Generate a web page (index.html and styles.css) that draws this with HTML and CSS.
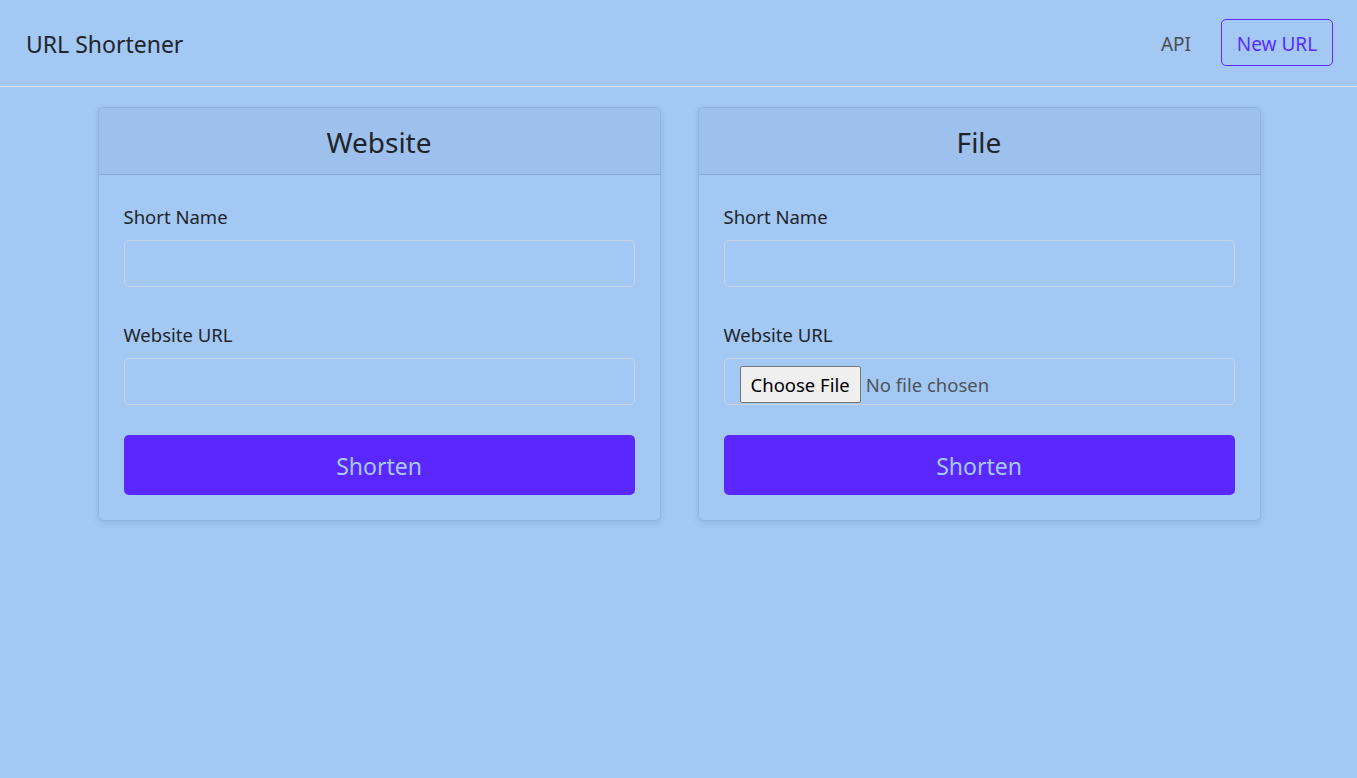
FILE: index.html
```html
<!DOCTYPE html>
<html lang="en">
<head>
<meta charset="utf-8">
<title>URL Shortener</title>
<link rel="stylesheet" href="styles.css">
</head>
<body>
<header class="navbar">
  <a class="brand" href="#">URL Shortener</a>
  <nav class="nav">
    <a class="nav-link" href="#">API</a>
    <a class="btn-outline" href="#">New URL</a>
  </nav>
</header>
<main class="container">
  <section class="card">
    <div class="card-header"><h3>Website</h3></div>
    <form class="card-body">
      <label class="label">Short Name</label>
      <input class="input" type="text">
      <label class="label second">Website URL</label>
      <input class="input" type="text">
      <button class="btn-primary" type="button">Shorten</button>
    </form>
  </section>
  <section class="card">
    <div class="card-header"><h3>File</h3></div>
    <form class="card-body">
      <label class="label">Short Name</label>
      <input class="input" type="text">
      <label class="label second">Website URL</label>
      <div class="input file-box">
        <span class="file-btn">Choose File</span>
        <span class="file-text">No file chosen</span>
      </div>
      <button class="btn-primary" type="button">Shorten</button>
    </form>
  </section>
</main>
</body>
</html>
```
FILE: styles.css
```css
* { box-sizing: border-box; }
html, body { margin: 0; padding: 0; }
body {
  background: #a3c8f4;
  font-family: "Noto Sans", "Open Sans", sans-serif;
  color: #212529;
  min-height: 778px;
}
.navbar {
  height: 87px;
  border-bottom: 1px solid #dfe3ea;
  display: flex;
  align-items: center;
  justify-content: space-between;
  padding: 0 24px 0 26px;
}
.brand {
  font-size: 23px;
  color: #212529;
  text-decoration: none;
  margin-top: 1px;
}
.nav { display: flex; align-items: center; }
.nav-link {
  font-size: 19px;
  color: #4a4d52;
  text-decoration: none;
  margin-right: 30px;
  margin-top: 2px;
}
.btn-outline {
  display: flex;
  align-items: center;
  justify-content: center;
  width: 112px;
  height: 47px;
  border: 1px solid #5b2bff;
  border-radius: 5px;
  color: #5b2bff;
  font-size: 19px;
  text-decoration: none;
  margin-top: -2px;
  padding-top: 3px;
}
.container {
  display: flex;
  justify-content: center;
  gap: 37px;
  padding-top: 20px;
  padding-left: 1px;
}
.card {
  width: 563px;
  border: 1px solid #92b3dc;
  border-radius: 5px;
  box-shadow: 0 2px 6px rgba(60, 90, 140, 0.18);
  overflow: hidden;
}
.card-header {
  background: #9dc0ec;
  border-bottom: 1px solid #8aaad6;
  height: 67px;
  display: flex;
  align-items: center;
  justify-content: center;
  padding-top: 2px;
}
.card-header h3 {
  margin: 0;
  font-weight: 400;
  font-size: 28px;
  color: #212529;
}
.card-body {
  padding: 25px 25px 25px;
  display: flex;
  flex-direction: column;
}
.label {
  font-size: 18.5px;
  line-height: 30px;
  margin-bottom: 10px;
  color: #212529;
  height: 30px;
  display: block;
  padding-top: 2px;
}
.label.second { margin-top: 31px; }
.input {
  height: 47px;
  border: 1px solid #c9d3e3;
  border-radius: 5px;
  background: transparent;
  font-size: 19px;
  font-family: inherit;
  width: 100%;
}
.file-box {
  display: flex;
  align-items: center;
  padding: 0 15px;
}
.file-btn {
  background: #efefef;
  border: 1px solid #767676;
  border-radius: 2px;
  height: 37px;
  padding: 1px 10px 0;
  margin-top: 5px;
  display: flex;
  align-items: center;
  font-size: 18.5px;
  color: #000;
  font-family: "Noto Sans", sans-serif;
}
.file-text {
  margin-left: 5px;
  margin-top: 5px;
  font-size: 18.5px;
  color: #4f5358;
}
.btn-primary {
  margin-top: 30px;
  height: 60px;
  border: none;
  border-radius: 5px;
  background: #5b27ff;
  color: #a6c9f6;
  font-family: inherit;
  font-size: 23px;
  width: 100%;
  padding-top: 2px;
}
```
